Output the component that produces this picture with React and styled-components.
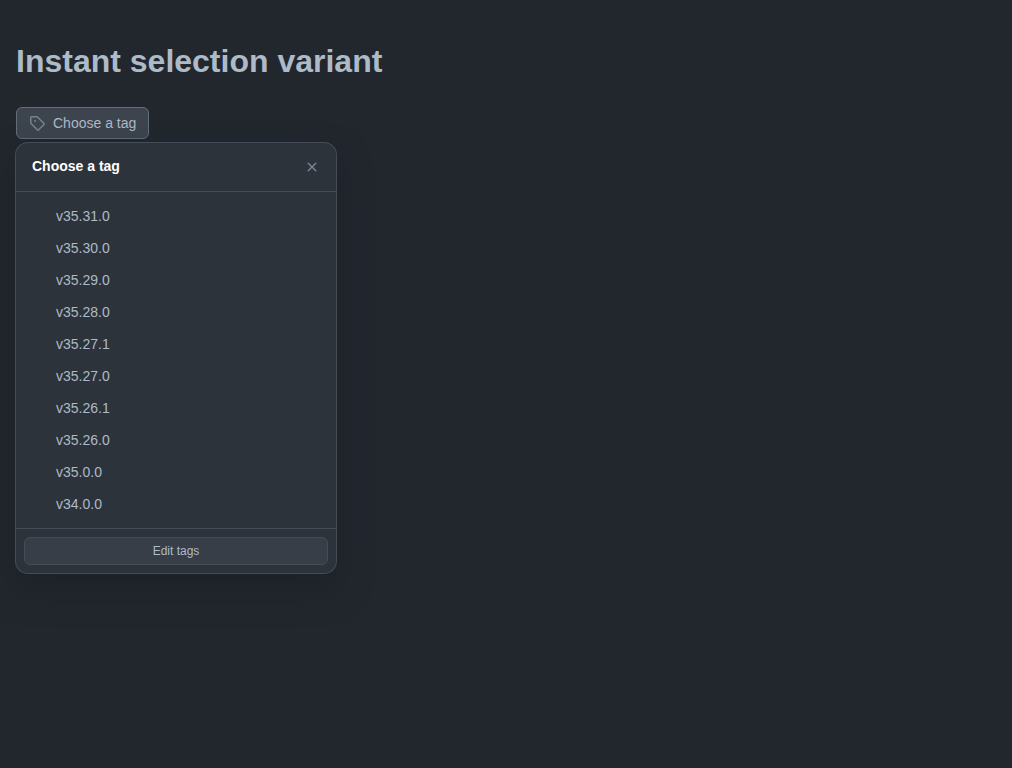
import React, { useState } from "react";
import styled, { createGlobalStyle } from "styled-components";

const GlobalStyle = createGlobalStyle`
  *, *::before, *::after {
    box-sizing: border-box;
  }
  body {
    margin: 0;
    min-height: 100vh;
    background: #22272e;
    color: #adbac7;
    font-family: "Liberation Sans", Arial, sans-serif;
    font-size: 14px;
    line-height: 20px;
  }
  button {
    font-family: inherit;
    color: inherit;
    cursor: pointer;
  }
`;

const Page = styled.main`
  padding: 16px;
`;

const Title = styled.h1`
  margin: 21px 0 22px;
  font-size: 32px;
  line-height: 48px;
  font-weight: 700;
`;

const Anchor = styled.div`
  position: relative;
  display: flex;
`;

const TagButton = styled.button`
  display: inline-flex;
  align-items: center;
  gap: 8px;
  height: 32px;
  padding: 0 12px;
  border: 1px solid #636e7b;
  border-radius: 6px;
  background: #3d444d;
  font-size: 14px;
  line-height: 20px;
`;

const Icon = styled.svg`
  display: block;
  flex: none;
  width: 16px;
  height: 16px;
  fill: #768390;
`;

const Overlay = styled.section`
  position: absolute;
  top: calc(100% + 4px);
  left: 0;
  width: 320px;
  max-width: 100%;
  border-radius: 12px;
  background: #2d333b;
  box-shadow: 0 0 0 1px #444c56, 0 16px 32px rgba(28, 33, 40, 0.85);
`;

const Header = styled.header`
  display: flex;
  align-items: flex-start;
  justify-content: space-between;
  padding: 8px 8px 8px 16px;
  border-bottom: 1px solid #444c56;
`;

const Heading = styled.h2`
  margin: 0;
  padding: 5px 0;
  color: #ffffff;
  font-size: 14px;
  line-height: 20px;
  font-weight: 700;
`;

const CloseButton = styled.button`
  display: grid;
  place-items: center;
  width: 32px;
  height: 32px;
  padding: 0;
  border: 0;
  border-radius: 6px;
  background: transparent;
`;

const List = styled.ul`
  margin: 0;
  padding: 8px;
  list-style: none;
`;

const Option = styled.button`
  display: block;
  width: 100%;
  height: 32px;
  padding: 6px 8px 6px 32px;
  border: 0;
  border-radius: 6px;
  background: ${({ $selected }) => ($selected ? "#373e47" : "transparent")};
  font-size: 14px;
  line-height: 20px;
  text-align: left;
`;

const Footer = styled.footer`
  padding: 8px;
  border-top: 1px solid #444c56;
`;

const EditButton = styled.button`
  display: block;
  width: 100%;
  height: 28px;
  padding: 0 12px;
  border: 1px solid #444c56;
  border-radius: 6px;
  background: #373e47;
  font-size: 12px;
  line-height: 20px;
`;

const tags = [
  "v35.31.0",
  "v35.30.0",
  "v35.29.0",
  "v35.28.0",
  "v35.27.1",
  "v35.27.0",
  "v35.26.1",
  "v35.26.0",
  "v35.0.0",
  "v34.0.0",
];

function TagIcon() {
  return (
    <Icon viewBox="0 0 16 16" aria-hidden="true">
      <path d="M1 7.775V2.75C1 1.784 1.784 1 2.75 1h5.025c.464 0 .91.184 1.238.513l6.25 6.25a1.75 1.75 0 0 1 0 2.474l-5.026 5.026a1.75 1.75 0 0 1-2.474 0l-6.25-6.25A1.752 1.752 0 0 1 1 7.775Zm1.5 0c0 .066.026.13.073.177l6.25 6.25a.25.25 0 0 0 .354 0l5.025-5.025a.25.25 0 0 0 0-.354l-6.25-6.25a.25.25 0 0 0-.177-.073H2.75a.25.25 0 0 0-.25.25ZM6 5a1 1 0 1 1 0 2 1 1 0 0 1 0-2Z" />
    </Icon>
  );
}

function CloseIcon() {
  return (
    <Icon viewBox="0 0 16 16" aria-hidden="true">
      <path d="M3.72 3.72a.75.75 0 0 1 1.06 0L8 6.94l3.22-3.22a.749.749 0 0 1 1.275.326.749.749 0 0 1-.215.734L9.06 8l3.22 3.22a.749.749 0 0 1-.326 1.275.749.749 0 0 1-.734-.215L8 9.06l-3.22 3.22a.751.751 0 0 1-1.042-.018.751.751 0 0 1-.018-1.042L6.94 8 3.72 4.78a.75.75 0 0 1 0-1.06Z" />
    </Icon>
  );
}

export default function App() {
  const [open, setOpen] = useState(true);
  const [selected, setSelected] = useState(null);

  const choose = (tag) => {
    setSelected(tag);
    setOpen(false);
  };

  return (
    <Page>
      <GlobalStyle />
      <Title>Instant selection variant</Title>
      <Anchor>
        <TagButton type="button" aria-expanded={open} onClick={() => setOpen(!open)}>
          <TagIcon />
          {selected || "Choose a tag"}
        </TagButton>
        {open && (
          <Overlay role="dialog" aria-labelledby="tag-heading">
            <Header>
              <Heading id="tag-heading">Choose a tag</Heading>
              <CloseButton type="button" aria-label="Close" onClick={() => setOpen(false)}>
                <CloseIcon />
              </CloseButton>
            </Header>
            <List>
              {tags.map((tag) => (
                <li key={tag}>
                  <Option type="button" $selected={tag === selected} onClick={() => choose(tag)}>
                    {tag}
                  </Option>
                </li>
              ))}
            </List>
            <Footer>
              <EditButton type="button">Edit tags</EditButton>
            </Footer>
          </Overlay>
        )}
      </Anchor>
    </Page>
  );
}
